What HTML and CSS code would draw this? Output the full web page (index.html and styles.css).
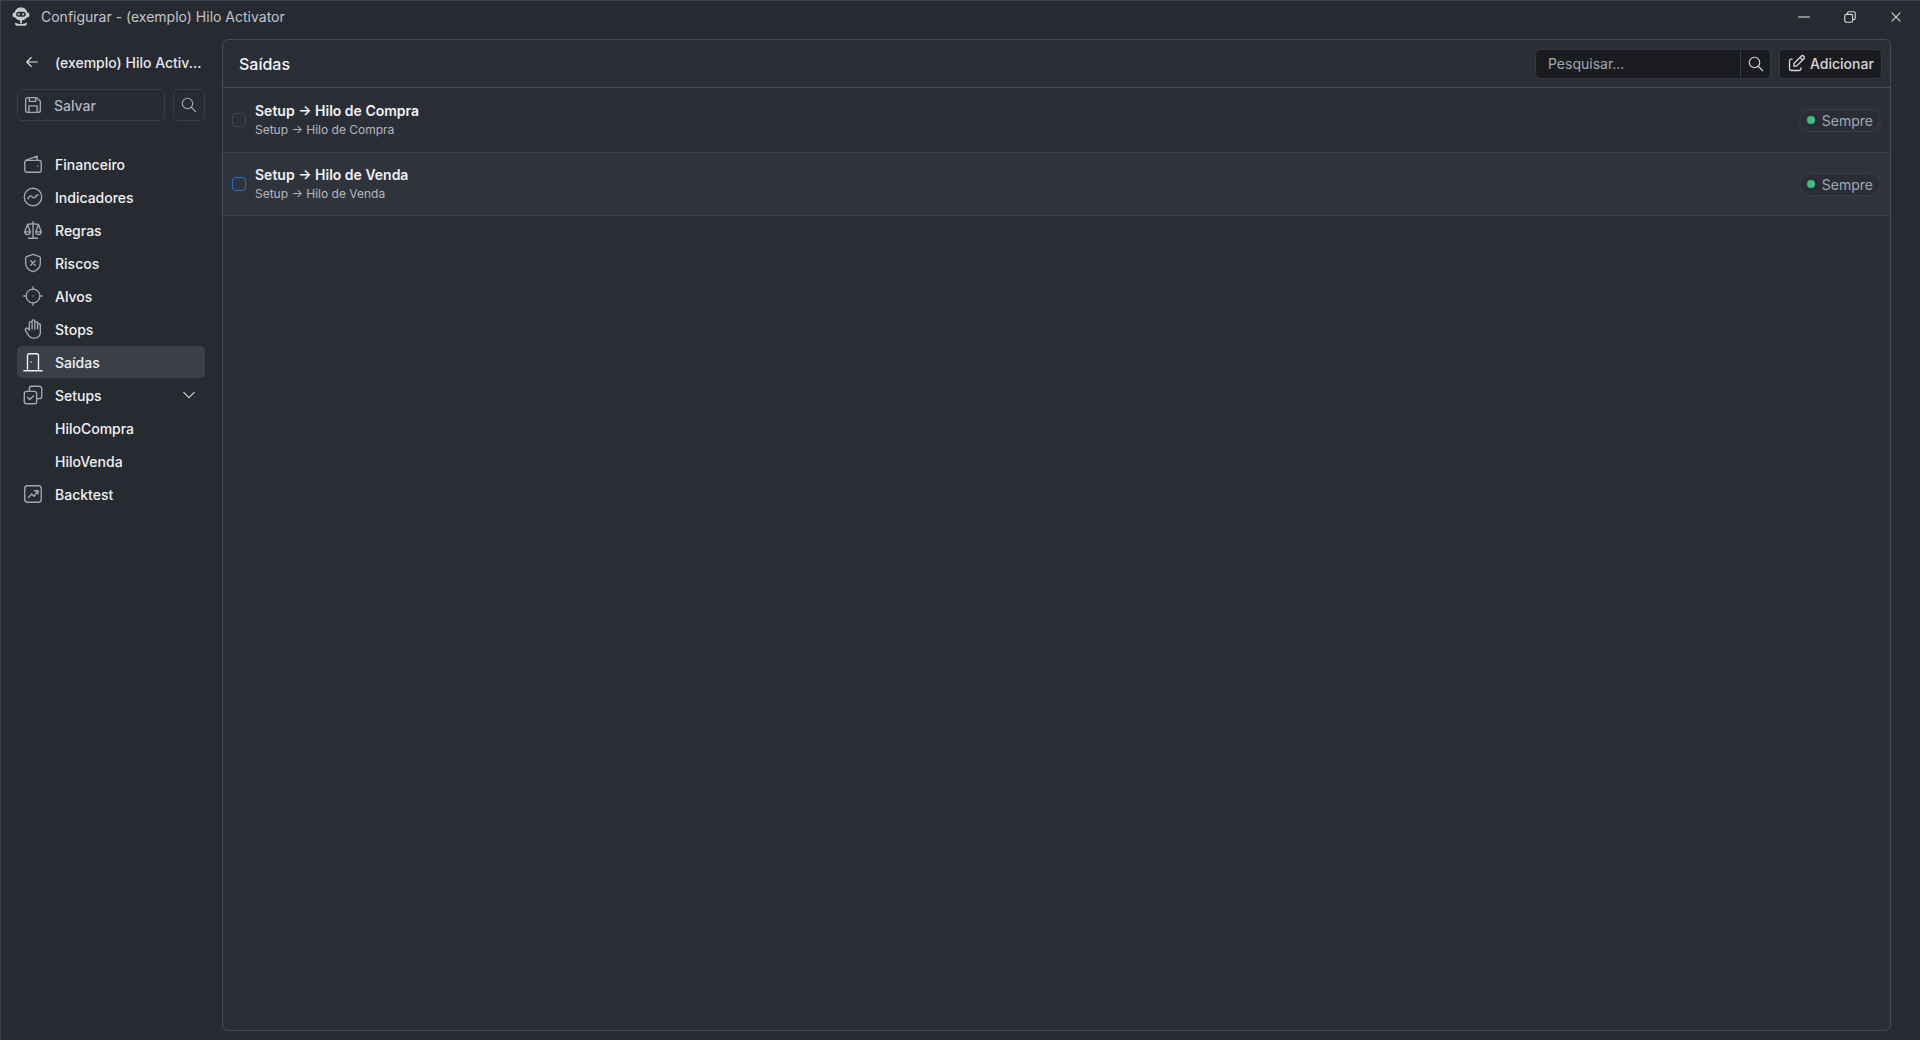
FILE: index.html
```html
<!DOCTYPE html>
<html lang="pt-BR">
<head>
    <meta charset="UTF-8">
    <title>Configurar - (exemplo) Hilo Activator</title>
    <link rel="stylesheet" href="styles.css">
</head>
<body>
    <div class="window">
        <header class="titlebar">
            <svg class="logo" viewBox="0 0 20 20">
                <path class="logo-fill" d="M10 .5c3.300 0 5.900 2.100 6.200 5h.5c1 0 1.800 1 1.800 2.400s-.8 2.400-1.800 2.400h-.8c-.8 1.900-3 3.100-5.900 3.100s-5.100-1.200-5.900-3.100h-.8c-1 0-1.800-1-1.800-2.400s.8-2.400 1.800-2.400h.5c.3-2.900 2.900-5 6.200-5z"/>
                <rect class="logo-eyes" x="5.200" y="4.800" width="9.600" height="5" rx="2.500"/>
                <circle class="logo-fill" cx="7.800" cy="7.300" r="1.100"/>
                <circle class="logo-fill" cx="12.200" cy="7.300" r="1.100"/>
                <path class="logo-fill" d="M9.100 13h1.800v3.500H9.100z"/>
                <path class="logo-fill" d="M4.300 15.400c1.700 1.100 3.700 1.500 5.700 1.500s4-.4 5.700-1.500c.7 1.800-.2 3.400-1.900 3.400H6.200c-1.700 0-2.600-1.600-1.900-3.400z"/>
            </svg>
            <span class="window-title">Configurar - (exemplo) Hilo Activator</span>
            <div class="window-controls">
                <svg viewBox="0 0 16 16"><path d="M1.500 8h13"/></svg>
                <svg viewBox="0 0 16 16"><rect x="2" y="5" width="9" height="9" rx="2"/><path d="M5 5V4a2 2 0 0 1 2-2h5a2 2 0 0 1 2 2v5a2 2 0 0 1-2 2h-1"/></svg>
                <svg viewBox="0 0 16 16"><path d="M3 3l10 10M13 3L3 13"/></svg>
            </div>
        </header>

        <div class="content">
            <aside class="sidebar">
                <div class="back-row">
                    <svg class="icon back-icon" viewBox="0 0 24 24"><path d="M5 12h14M5 12l6 6M5 12l6-6"/></svg>
                    <span class="back-title">(exemplo) Hilo Activ...</span>
                </div>
                <div class="action-row">
                    <button class="save-btn">
                        <svg class="icon" viewBox="0 0 24 24"><path d="M6 4h10l4 4v10a2 2 0 0 1-2 2H6a2 2 0 0 1-2-2V6a2 2 0 0 1 2-2z"/><path d="M8 4v4h7V4M7.500 20v-7h9v7"/></svg>
                        <span>Salvar</span>
                    </button>
                    <button class="square-btn">
                        <svg class="icon small" viewBox="0 0 24 24"><circle cx="10" cy="10" r="7"/><path d="M21 21l-6-6"/></svg>
                    </button>
                </div>
                <nav class="nav">
                    <a class="nav-item">
                        <svg class="icon" viewBox="0 0 24 24"><path d="M4 8l12.500-4.500V8"/><rect x="3" y="8" width="18" height="13" rx="2.500"/><path d="M17 14.500v.01"/></svg>
                        <span>Financeiro</span>
                    </a>
                    <a class="nav-item">
                        <svg class="icon" viewBox="0 0 24 24"><circle cx="12" cy="12" r="9.500"/><path d="M6.500 14c1.500-3 3-4 4.300-2.500s2.700 2 3.700.5 2-2.500 3-2"/></svg>
                        <span>Indicadores</span>
                    </a>
                    <a class="nav-item">
                        <svg class="icon" viewBox="0 0 24 24"><path d="M7 21h10M6 6l6-1 6 1M12 3v18M9 14L6 6l-3 8M21 14l-3-8-3 8M3 14a3 3 0 0 0 6 0zM15 14a3 3 0 0 0 6 0z"/></svg>
                        <span>Regras</span>
                    </a>
                    <a class="nav-item">
                        <svg class="icon" viewBox="0 0 24 24"><path d="M12 2.500l7 2.500c.6.2 1 .8 1 1.400V12c0 4.500-3.400 8-8 9.500C7.400 20 4 16.500 4 12V6.400c0-.6.4-1.200 1-1.400z"/><path d="M9.500 9.500l5 5M14.500 9.500l-5 5"/></svg>
                        <span>Riscos</span>
                    </a>
                    <a class="nav-item">
                        <svg class="icon" viewBox="0 0 24 24"><circle cx="12" cy="12" r="7.500"/><path d="M12 2v2.500M12 19.500V22M2 12h2.500M19.500 12H22M12 12v.01"/></svg>
                        <span>Alvos</span>
                    </a>
                    <a class="nav-item">
                        <svg class="icon" viewBox="0 0 24 24"><path d="M8 13V5.500a1.500 1.500 0 0 1 3 0V12M11 5.500v-2a1.500 1.500 0 1 1 3 0V12M14 5.500a1.500 1.500 0 0 1 3 0V12M17 7.500a1.500 1.500 0 0 1 3 0V16a6 6 0 0 1-6 6h-2 .208a6 6 0 0 1-5.012-2.700l-.196-.3c-.312-.479-1.407-2.388-3.286-5.728a1.500 1.500 0 0 1 .536-2.022 1.867 1.867 0 0 1 2.280.28L8 13"/></svg>
                        <span>Stops</span>
                    </a>
                    <a class="nav-item active">
                        <svg class="icon" viewBox="0 0 24 24"><path d="M10 12v.01M2 21.500h20M6 21.500V5a2 2 0 0 1 2-2h8a2 2 0 0 1 2 2v16.500"/></svg>
                        <span>Saídas</span>
                    </a>
                    <a class="nav-item">
                        <svg class="icon" viewBox="0 0 24 24"><rect x="2.500" y="8" width="13.500" height="13.500" rx="2.500"/><path d="M8 8V5A2.500 2.500 0 0 1 10.500 2.500h8.500A2.500 2.500 0 0 1 21.500 5v8.500a2.500 2.500 0 0 1-2.500 2.500H16"/><path d="M6 14.500l2.500 2.500 4-4"/></svg>
                        <span>Setups</span>
                        <svg class="icon small chevron" viewBox="0 0 24 24"><path d="M5 8.500l7 7 7-7"/></svg>
                    </a>
                    <a class="nav-item sub">HiloCompra</a>
                    <a class="nav-item sub">HiloVenda</a>
                    <a class="nav-item">
                        <svg class="icon" viewBox="0 0 24 24"><rect x="3" y="3" width="18" height="18" rx="3"/><path d="M7 16l3.500-4 2.500 2.500L17 9M13.500 8.500H17.500V12"/></svg>
                        <span>Backtest</span>
                    </a>
                </nav>
            </aside>

            <main class="panel">
                <div class="panel-header">
                    <h2>Saídas</h2>
                    <div class="search">
                        <span class="search-input">Pesquisar...</span>
                        <span class="search-btn">
                            <svg class="icon small" viewBox="0 0 24 24"><circle cx="10" cy="10" r="7"/><path d="M21 21l-6-6"/></svg>
                        </span>
                    </div>
                    <button class="add-btn">
                        <svg class="icon" viewBox="0 0 24 24"><path d="M7 7H6a2 2 0 0 0-2 2v9a2 2 0 0 0 2 2h9a2 2 0 0 0 2-2v-1"/><path d="M20.385 6.585a2.100 2.100 0 0 0-2.970-2.970L9 12v3h3l8.385-8.415zM16 5l3 3"/></svg>
                        <span>Adicionar</span>
                    </button>
                </div>
                <div class="row row-first">
                    <span class="check"></span>
                    <div class="row-text">
                        <div class="row-title">Setup → Hilo de Compra</div>
                        <div class="row-sub">Setup → Hilo de Compra</div>
                    </div>
                    <span class="chip"><i class="dot"></i>Sempre</span>
                </div>
                <div class="row row-hover">
                    <span class="check check-blue"></span>
                    <div class="row-text">
                        <div class="row-title">Setup → Hilo de Venda</div>
                        <div class="row-sub">Setup → Hilo de Venda</div>
                    </div>
                    <span class="chip"><i class="dot"></i>Sempre</span>
                </div>
            </main>
        </div>
    </div>
</body>
</html>
```

FILE: styles.css
```css
* {
    box-sizing: border-box;
}

html, body {
    margin: 0;
    height: 100%;
    overflow: hidden;
}

body {
    background: #272a31;
    color: #fff;
    font-family: Inter, "Noto Sans", sans-serif;
    font-size: 14px;
}

.window {
    display: flex;
    flex-direction: column;
    height: 1040px;
    border: 1px solid #3c3f47;
    border-right: 0;
    border-bottom: 0;
}

.titlebar {
    display: flex;
    align-items: center;
    height: 31px;
    flex: none;
    padding: 0 11px 0 10px;
}

.logo {
    width: 20px;
    height: 20px;
    margin-right: 10px;
}

.logo-fill {
    fill: #c9cbd0;
}

.logo-eyes {
    fill: #272a31;
}

.window-title {
    color: #c1c5cc;
    font-size: 14px;
}

.window-controls {
    display: flex;
    align-items: center;
    gap: 32px;
    margin-left: auto;
    padding-right: 6px;
}

.window-controls svg {
    width: 14px;
    height: 14px;
    fill: none;
    stroke: #d5d7db;
    stroke-width: 1.300;
}

.content {
    display: flex;
    flex: 1;
    min-height: 0;
}

.icon {
    width: 22px;
    height: 22px;
    flex: none;
    fill: none;
    stroke: #a3a7af;
    stroke-width: 1.500;
    stroke-linecap: round;
    stroke-linejoin: round;
}

.icon.small {
    width: 18px;
    height: 18px;
}

.sidebar {
    width: 221px;
    flex: none;
    padding: 6px 17px 0 16px;
}

.back-row {
    display: flex;
    align-items: center;
    height: 48px;
    padding-left: 6px;
}

.icon.back-icon {
    width: 18px;
    height: 18px;
    margin-right: 14px;
    stroke: #e2e3e6;
}

.back-title {
    color: #e6e7ea;
    font-weight: 500;
    white-space: nowrap;
}

.action-row {
    display: flex;
    gap: 8px;
    margin-top: 3px;
}

.save-btn {
    display: flex;
    align-items: center;
    gap: 10px;
    width: 148px;
    height: 32px;
    padding: 0 4px;
    background: transparent;
    border: 1px solid #3a3d45;
    border-radius: 5px;
    color: #b4b7be;
    font: inherit;
    font-weight: 500;
}

.square-btn {
    display: flex;
    align-items: center;
    justify-content: center;
    width: 32px;
    height: 32px;
    padding: 0;
    background: transparent;
    border: 1px solid #3a3d45;
    border-radius: 5px;
}

.nav {
    display: flex;
    flex-direction: column;
    gap: 1px;
    margin-top: 27px;
}

.nav-item {
    display: flex;
    align-items: center;
    gap: 11px;
    height: 32px;
    padding: 0 5px;
    border-radius: 5px;
    color: #f1f2f4;
    font-weight: 500;
}

.nav-item.active {
    background: #3c3f49;
}

.nav-item.active .icon {
    stroke: #f1f2f4;
}

.nav-item.sub {
    padding-left: 38px;
}

.icon.chevron {
    margin-left: auto;
    margin-right: 2px;
    stroke: #d5d7db;
}

.panel {
    width: 1669px;
    height: 992px;
    flex: none;
    margin-top: 7px;
    background: #2b2e37;
    border: 1px solid #484b54;
    border-radius: 6px;
}

.panel-header {
    display: flex;
    align-items: center;
    height: 48px;
    padding: 0 8px 0 16px;
    border-bottom: 1px solid #484b54;
}

.panel-header h2 {
    margin: 0 auto 0 0;
    font-size: 16px;
    font-weight: 500;
    color: #f4f5f6;
}

.search {
    display: flex;
    width: 236px;
    height: 30px;
    margin-right: 8px;
    background: #1b1c20;
    border: 1px solid #363941;
    border-radius: 5px;
}

.search-input {
    flex: 1;
    padding-left: 12px;
    line-height: 28px;
    color: #a4a8b0;
}

.search-btn {
    display: flex;
    align-items: center;
    justify-content: center;
    width: 30px;
    border-left: 1px solid #363941;
}

.search-btn .icon,
.add-btn .icon {
    stroke: #d5d7db;
}

.add-btn {
    display: flex;
    align-items: center;
    gap: 3px;
    width: 103px;
    height: 30px;
    padding: 0 6px;
    background: #1b1c20;
    border: 1px solid #363941;
    border-radius: 5px;
    color: #d5d7db;
    font: inherit;
    font-weight: 500;
}

.add-btn .icon {
    width: 21px;
    height: 21px;
}

.row {
    display: flex;
    align-items: center;
    height: 65px;
    padding: 0 9px;
    border-bottom: 1px solid #3e414a;
}

.row-hover {
    height: 63px;
    background: #30333c;
}

.check {
    width: 14px;
    height: 14px;
    flex: none;
    border: 1px solid #42454e;
    border-radius: 4px;
}

.check-blue {
    border-color: #1c6ed4;
}

.row-text {
    margin-left: 9px;
}

.row-title {
    font-weight: 600;
    font-size: 14px;
    line-height: 18px;
    color: #f1f2f4;
}

.row-sub {
    margin-top: 2px;
    font-size: 12px;
    line-height: 16px;
    color: #b4b7be;
}

.chip {
    display: flex;
    align-items: center;
    gap: 7px;
    height: 23px;
    margin-left: auto;
    padding: 0 7px;
    background: #2a2d35;
    border: 1px solid #3c3f48;
    border-radius: 12px;
    color: #a4a8b0;
    font-size: 14px;
}

.dot {
    width: 8px;
    height: 8px;
    border-radius: 50%;
    background: #40c07f;
}
```
